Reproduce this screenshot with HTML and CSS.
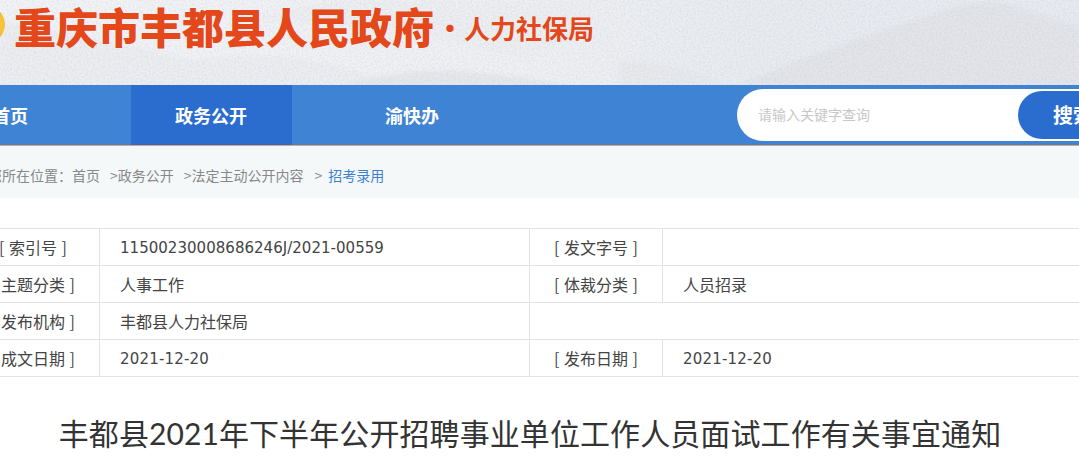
FILE: index.html
```html
<!DOCTYPE html>
<html lang="zh-CN">
<head>
<meta charset="utf-8">
<title>丰都县2021年下半年公开招聘事业单位工作人员面试工作有关事宜通知</title>
<link rel="stylesheet" href="styles.css">
</head>
<body>
<header class="banner">
  <svg class="mountains" viewBox="0 0 1079 85" preserveAspectRatio="none" aria-hidden="true">
    <defs>
      <filter id="grain" x="0" y="0" width="100%" height="100%">
        <feTurbulence type="fractalNoise" baseFrequency="0.55" numOctaves="2" seed="4"/>
        <feColorMatrix type="matrix" values="0 0 0 0 0.45  0 0 0 0 0.47  0 0 0 0 0.52  0.5 0 0 0 -0.18"/>
      </filter>
      <filter id="soft" x="-5%" y="-20%" width="110%" height="140%">
        <feGaussianBlur stdDeviation="2"/>
      </filter>
      <linearGradient id="sky" x1="0" y1="0" x2="1" y2="0">
        <stop offset="0" stop-color="#f3f4f7"/>
        <stop offset="0.5" stop-color="#eff1f4"/>
        <stop offset="0.7" stop-color="#e9ecf1"/>
        <stop offset="1" stop-color="#e8ebf1"/>
      </linearGradient>
    </defs>
    <rect width="1079" height="85" fill="url(#sky)"/>
    <g filter="url(#soft)">
      <path fill="#eceef2" d="M0 20C60 32 130 44 190 60C270 50 340 57 400 90H0Z"/>
      <path fill="#edeff2" d="M250 18C290 8 330 0 370 0H600C590 20 570 34 530 62C470 40 380 28 250 18Z"/>
      <path fill="#e8eaee" d="M620 60C660 62 700 70 740 90H620Z"/>
      <path fill="#e6e8ec" d="M330 90C380 72 430 68 470 72C510 76 560 82 590 90Z"/>
    </g>
    <path fill="#e3e5ea" d="M740 85C790 62 880 30 940 12C970 0 1000 0 1020 8C1040 16 1060 20 1079 26V85Z" filter="url(#soft)"/>
    <rect width="1079" height="85" filter="url(#grain)"/>
  </svg>
  <div class="seal"></div>
  <span class="site-name">重庆市丰都县人民政府</span>
  <span class="dot">·</span>
  <span class="dept-name">人力社保局</span>
</header>
<nav class="nav">
  <a class="nav-item">首页</a>
  <a class="nav-item active">政务公开</a>
  <a class="nav-item">渝快办</a>
  <div class="search">
    <span class="placeholder">请输入关键字查询</span>
    <span class="search-btn">搜索</span>
  </div>
</nav>
<div class="crumbs">
  <span>您所在位置<span class="colon">：</span>首页</span>
  <span class="crumb-a">&gt;政务公开</span>
  <span class="crumb-b">&gt;法定主动公开内容</span>
  <span class="crumb-sep">&gt;</span>
  <span class="crumb-cur">招考录用</span>
</div>
<table class="meta">
  <colgroup><col class="c1"><col class="c2"><col class="c3"><col class="c4"></colgroup>
  <tr><th>[ 索引号 ]</th><td class="num">11500230008686246J/2021-00559</td><th>[ 发文字号 ]</th><td></td></tr>
  <tr><th>[ 主题分类 ]</th><td>人事工作</td><th>[ 体裁分类 ]</th><td>人员招录</td></tr>
  <tr><th>[ 发布机构 ]</th><td>丰都县人力社保局</td><td colspan="2"></td></tr>
  <tr><th>[ 成文日期 ]</th><td class="num date">2021-12-20</td><th>[ 发布日期 ]</th><td class="num date">2021-12-20</td></tr>
</table>
<h1 class="title">丰都县2021年下半年公开招聘事业单位工作人员面试工作有关事宜通知</h1>
</body>
</html>
```
FILE: styles.css
```css
html, body { margin: 0; padding: 0; height: 463px; overflow: hidden; background: #fff; }
body { font-family: "Noto Sans CJK SC", sans-serif; color: #333; width: 1079px; }
.banner { position: relative; height: 85px; display: flex; align-items: flex-start; overflow: hidden; padding-left: 14px; box-sizing: border-box; }
.mountains { position: absolute; inset: 0; width: 100%; height: 100%; }
.seal { position: absolute; left: -37px; top: 5px; width: 42px; height: 39px; border-radius: 50%; background: radial-gradient(circle at 85% 50%, #f7c63c, #eea81e); }
.site-name, .dot, .dept-name { position: relative; color: #e3471a; font-weight: 900; white-space: nowrap; }
.site-name { font-size: 42px; line-height: 56px; margin-top: -2px; }
.dot { font-size: 26px; line-height: 56px; margin-left: 3px; width: 27px; margin-top: -1px; }
.dept-name { font-size: 26px; line-height: 56px; font-weight: 700; }
.nav { height: 60px; background: #3f84d4; border-bottom: 1px solid #e8a372; display: flex; align-items: center; gap: 40px; margin-left: -70px; width: 1149px; overflow: hidden; }
.nav-item { flex: 0 0 161px; height: 60px; line-height: 60px; text-align: center; color: #fff; font-size: 18px; font-weight: 700; padding-right: 1px; box-sizing: border-box; }
.nav-item.active { background: #2a6dcf; }
.search { flex: 0 0 auto; margin-left: 204px; width: 500px; height: 52px; background: #fff; border-radius: 26px; display: flex; align-items: center; justify-content: space-between; padding: 0 0 0 21px; box-sizing: border-box; }
.placeholder { color: #c8c8c8; font-size: 14px; position: relative; top: -1px; }
.search-btn { width: 217px; height: 48px; margin-right: 2px; border-radius: 24px 0 0 24px; background: #2a6dcf; color: #fff; font-size: 20px; font-weight: 700; line-height: 48px; padding-left: 35px; box-sizing: border-box; }
.crumbs { height: 52px; background: #f5f8f9; color: #888; font-size: 14px; line-height: 58px; margin-left: -12px; width: 1091px; display: flex; white-space: nowrap; }
.colon { font-family: "Noto Sans CJK TC", sans-serif; }
.crumb-a { margin-left: 10px; }
.crumb-b { margin-left: 10px; }
.crumb-sep { margin-left: 11px; }
.crumb-cur { margin-left: 6px; color: #3f7fd0; }
.meta { margin: 30px 0 0 -34px; border-collapse: collapse; table-layout: fixed; width: 1200px; color: #444; }
.c1 { width: 133px; } .c2 { width: 430px; } .c3 { width: 133px; } .c4 { width: 504px; }
.meta th, .meta td { height: 36px; padding: 0; border: 1px solid #e3e3e3; font-weight: 400; line-height: 36px; font-size: 16px; }
.meta th { text-align: center; word-spacing: 1px; }
.meta td { padding-left: 20px; }
.meta td.num { font-family: "DejaVu Sans", sans-serif; font-size: 15px; height: 34px; line-height: 34px; padding-top: 2px; letter-spacing: 0.03px; }
.meta td.date { letter-spacing: 0.18px; }
.title { margin: 31px 0 0; font-family: Lato, "Noto Sans CJK SC", sans-serif; font-size: 30px; line-height: 50px; font-weight: 400; text-align: center; color: #333; white-space: nowrap; width: 1060px; letter-spacing: 0.09px; }
```
